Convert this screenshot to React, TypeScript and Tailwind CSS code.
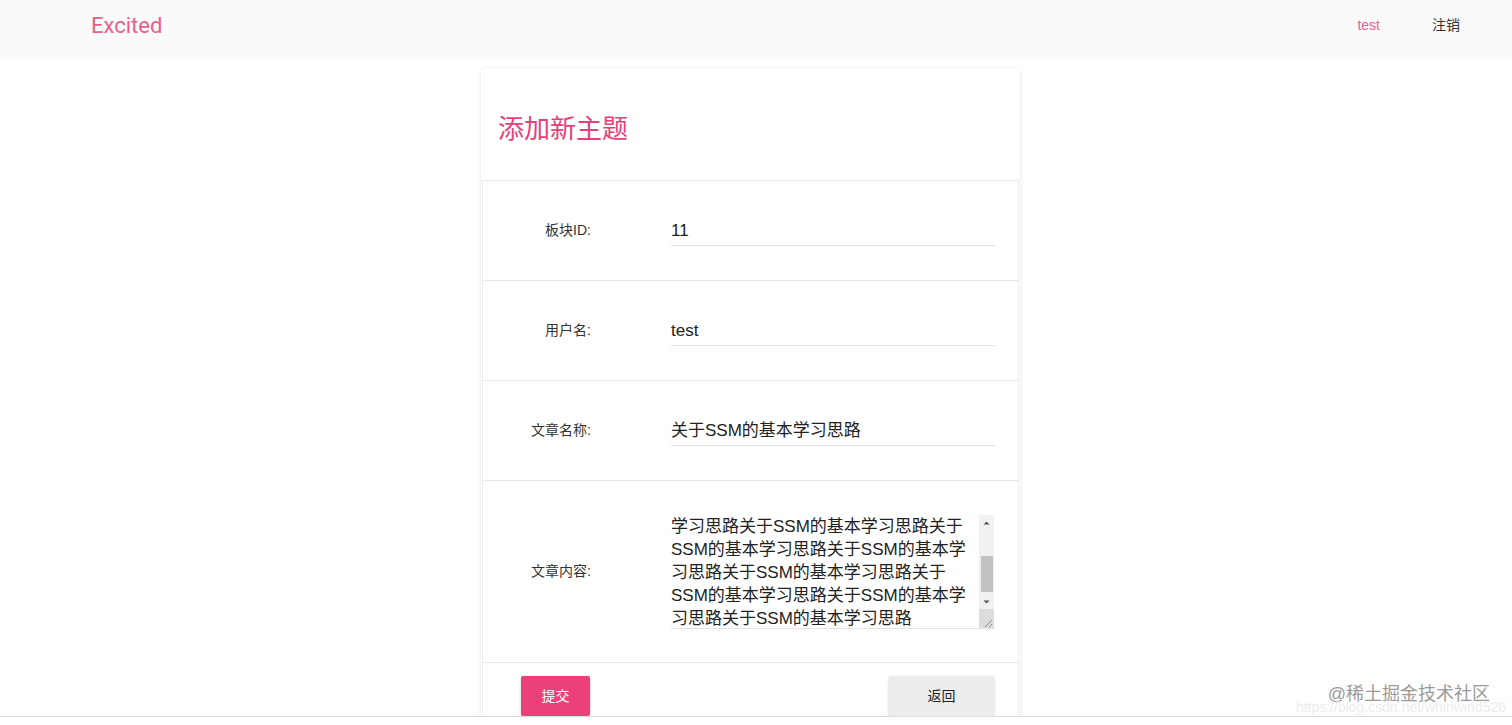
import React from "react";

const cjk = { fontFamily: '"Liberation Sans", "Noto Sans CJK SC", sans-serif' };

function Row({ label, value, big }: { label: string; value: React.ReactNode; big?: boolean }) {
  return (
    <div className={`flex items-center border-t border-[#e6e6e6] ${big ? "h-[182px]" : "h-[100px]"}`}>
      <div className="w-[108px] text-right text-[14px] text-[#333] shrink-0">{label}</div>
      <div className="ml-[80px] w-[324px]">{value}</div>
    </div>
  );
}

function Input({ text }: { text: string }) {
  return (
    <div className="h-[30px] border-b border-[#e3e3e3] flex items-center text-[17px] text-[#222] pt-[1px]">
      {text}
    </div>
  );
}

function TextArea() {
  const lines = [
    "学习思路关于SSM的基本学习思路关于",
    "SSM的基本学习思路关于SSM的基本学",
    "习思路关于SSM的基本学习思路关于",
    "SSM的基本学习思路关于SSM的基本学",
    "习思路关于SSM的基本学习思路",
  ];
  return (
    <div className="relative h-[114px] border-b border-[#e3e3e3] overflow-hidden">
      <div className="text-[17px] leading-[23px] text-[#222] whitespace-nowrap">
        {lines.map((l, i) => (
          <div key={i}>{l}</div>
        ))}
      </div>
      <div className="absolute right-[1px] top-0 w-[15px] h-[95px] bg-[#f1f1f1] flex flex-col items-center">
        <svg width="15" height="15" viewBox="0 0 15 15">
          <path d="M4.5 9.5 L7.5 6.5 L10.5 9.5 Z" fill="#505050" />
        </svg>
        <div className="mt-[26px] w-[12px] h-[36px] bg-[#c1c1c1]" />
        <div className="flex-1" />
        <svg width="15" height="15" viewBox="0 0 15 15">
          <path d="M4.5 5.5 L7.5 8.5 L10.5 5.5 Z" fill="#505050" />
        </svg>
      </div>
      <div className="absolute right-[1px] bottom-0 w-[15px] h-[19px] bg-[#dcdcdc]">
        <svg width="15" height="19" viewBox="0 0 15 19" className="absolute inset-0">
          <path d="M13 11 L6 18 M13 15 L10 18" stroke="#8a8a8a" strokeWidth="1" />
        </svg>
      </div>
    </div>
  );
}

export default function App() {
  return (
    <div className="w-[1512px] h-[725px] bg-white overflow-hidden relative" style={cjk}>
      <header className="h-[60px] bg-[#fafafa] flex items-center">
        <div className="pl-[91px] text-[22px] text-[#ea5e8f] pb-[10px]" style={{ fontFamily: "Roboto, sans-serif" }}>
          Excited
        </div>
        <div className="flex-1" />
        <div className="flex items-center pb-[10px]">
          <span className="text-[14px] text-[#ec5f90] mr-[52px]">test</span>
          <span className="text-[14px] text-[#333] mr-[52px]">注销</span>
        </div>
      </header>
      <main className="h-[656px] overflow-hidden pr-[11px] pt-[8px]">
        <div className="mx-auto w-[539px] bg-white shadow-[0_1px_4px_rgba(0,0,0,0.12)] rounded-[2px]">
          <div className="h-[112px] flex items-center pl-[17px] pt-[10px]">
            <h1 className="text-[26px] text-[#e6407c]">添加新主题</h1>
          </div>
          <div className="mx-[1px] border-x border-[#ececec]">
            <Row label="板块ID:" value={<Input text="11" />} />
            <Row label="用户名:" value={<Input text="test" />} />
            <Row label="文章名称:" value={<Input text="关于SSM的基本学习思路" />} />
            <Row label="文章内容:" big value={<TextArea />} />
            <div className="h-[80px] border-t border-[#e6e6e6] flex items-start pt-[13px] pl-[38px] pr-[24px]">
              <button className="w-[69px] h-[40px] bg-[#ec407a] text-white text-[14px] rounded-[2px] shadow-[0_1px_3px_rgba(0,0,0,0.2)]">
                提交
              </button>
              <div className="flex-1" />
              <button className="w-[105px] h-[40px] bg-[#ededed] text-[#222] text-[14px] rounded-[2px] shadow-[0_1px_3px_rgba(0,0,0,0.2)]">
                返回
              </button>
            </div>
          </div>
        </div>
      </main>
      <div className="h-[9px] border-t border-[#dcdcdc] bg-white" />
      <div className="absolute right-[22px] bottom-[22px] text-[18px] text-[#9a9a9a] leading-none">@稀土掘金技术社区</div>
      <div className="absolute right-[6px] bottom-[11px] text-[14px] text-[#ececec] leading-none">https://blog.csdn.net/whirlwind526</div>
    </div>
  );
}
